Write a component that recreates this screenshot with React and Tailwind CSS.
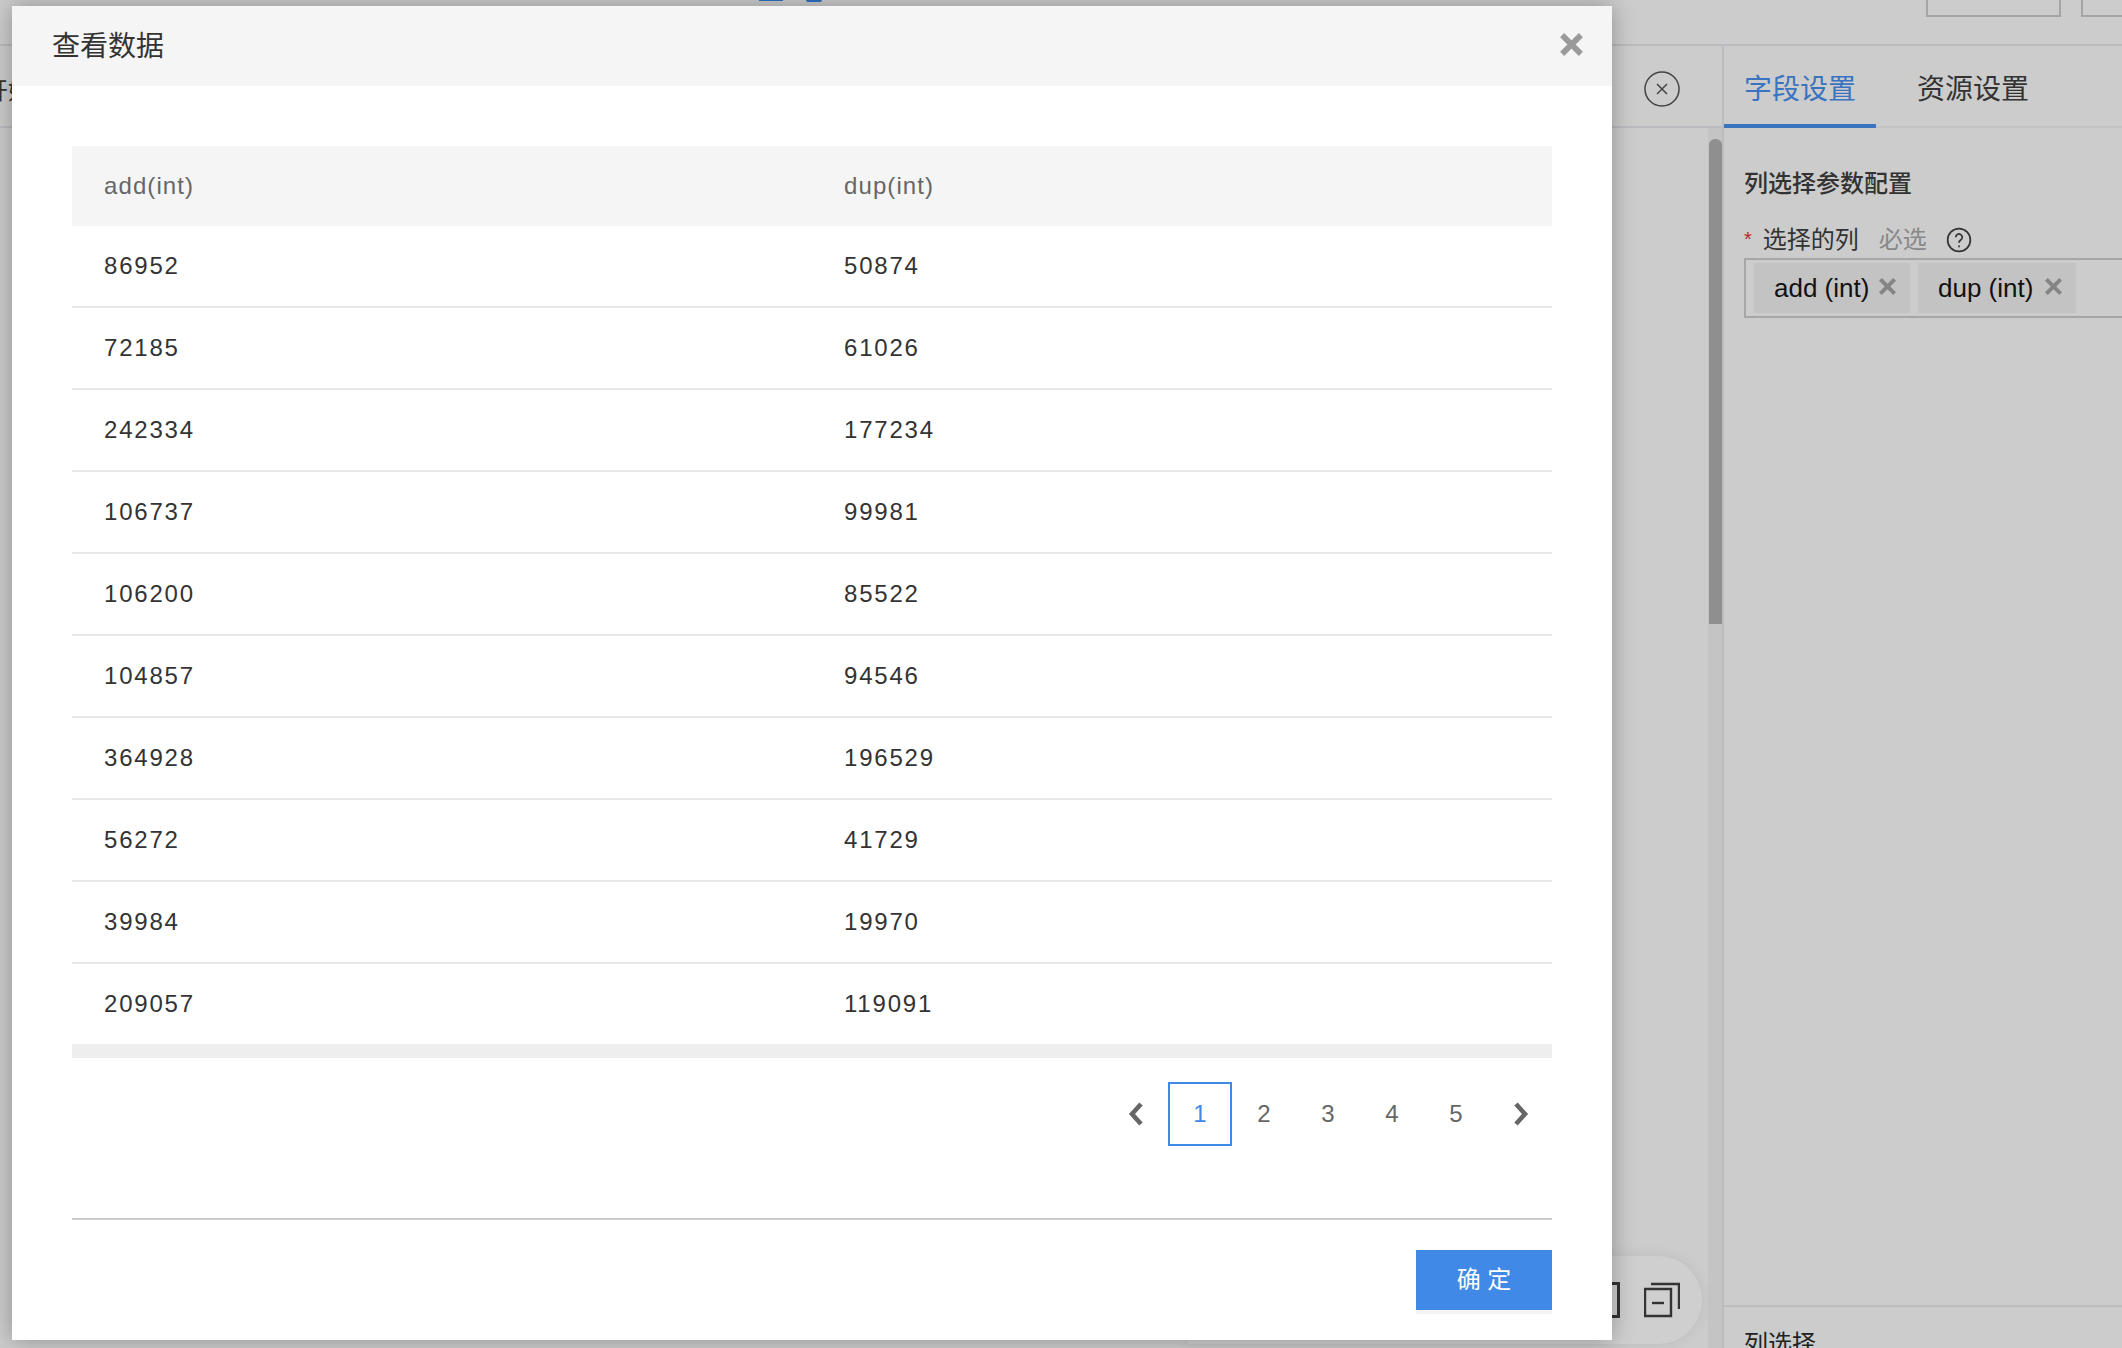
const rows = [
  ['86952', '50874'],
  ['72185', '61026'],
  ['242334', '177234'],
  ['106737', '99981'],
  ['106200', '85522'],
  ['104857', '94546'],
  ['364928', '196529'],
  ['56272', '41729'],
  ['39984', '19970'],
  ['209057', '119091'],
];

function CloseX({ className, width = 5 }) {
  return (
    <svg viewBox="0 0 24 24" className={className} fill="none" stroke="currentColor" strokeWidth={width}>
      <path d="M3 3 21 21M21 3 3 21" />
    </svg>
  );
}

function Tag({ label, className }) {
  return (
    <div className={`flex h-[50px] items-center justify-between bg-[#c3c3c3] pl-[20px] pr-[13px] ${className}`}>
      <span className="text-[26px] text-[#111]">{label}</span>
      <CloseX className="mb-1 h-[19px] w-[19px] text-[#858585]" />
    </div>
  );
}

function Backdrop() {
  return (
    <div className="flex h-full w-full flex-col bg-[#cccccc]">
      <div className="flex h-[46px] shrink-0 items-start justify-end gap-5 border-b-2 border-[#bcbcc0]">
        <div className="h-[17px] w-[135px] border-2 border-t-0 border-[#a5a5a5]" />
        <div className="h-[17px] w-[41px] border-2 border-t-0 border-r-0 border-[#a5a5a5]" />
      </div>
      <div className="flex min-h-0 flex-1">
        <div className="flex min-w-0 flex-1 flex-col">
          <div className="flex h-[82px] shrink-0 items-center justify-end border-b-2 border-[#bcbcc0] pr-[42px] pt-[6px]">
            <svg viewBox="0 0 36 36" className="h-9 w-9 text-[#444]" fill="none" stroke="currentColor" strokeWidth="1.5">
              <circle cx="18" cy="18" r="17" />
              <path d="M13 13 23 23M23 13 13 23" />
            </svg>
          </div>
          <div className="flex flex-1 justify-end">
            <div className="w-[14px] bg-[#c4c4c4] pt-[11px]">
              <div className="ml-px h-[485px] w-[13px] rounded-t-md bg-[#8f8f8f]" />
            </div>
          </div>
        </div>
        <div className="flex w-[400px] shrink-0 flex-col border-l-2 border-[#bcbcc0]">
          <div className="flex h-[82px] shrink-0 items-end border-b-2 border-[#c2c2c2]">
            <div className="-mb-0.5 flex h-[82px] w-[152px] items-center border-b-4 border-[#3a74c0] pl-[20px] pt-[10px] text-[28px] text-[#3a74c0]">字段设置</div>
            <div className="flex h-[80px] items-center pl-[41px] pt-[8px] text-[28px] text-[#333]">资源设置</div>
          </div>
          <div className="flex flex-1 flex-col pl-[20px]">
            <div className="mt-[41px] text-[24px] font-medium leading-[30px] text-[#333]">列选择参数配置</div>
            <div className="mt-[23px] flex h-[36px] items-center text-[24px] text-[#333]">
              <span className="mr-[11px] mt-[-2px] text-[20px] text-[#b52a2a]">*</span>
              <span>选择的列</span>
              <span className="ml-[20px] text-[#888]">必选</span>
              <svg viewBox="0 0 24 24" className="ml-[19px] h-[26px] w-[26px] text-[#333]" fill="none" stroke="currentColor" strokeWidth="1.6">
                <circle cx="12" cy="12" r="10.5" />
                <path d="M9 9.5a3 3 0 1 1 4.6 2.5c-1 .7-1.6 1.2-1.6 2.5" />
                <path d="M12 17v1.6" />
              </svg>
            </div>
            <div className="flex h-[60px] items-center gap-[8px] border-2 border-r-0 border-[#a6a6a6] pl-[8px]">
              <Tag label="add (int)" className="w-[156px]" />
              <Tag label="dup (int)" className="w-[158px]" />
            </div>
            <div className="flex-1" />
            <div className="-ml-[20px] h-[43px] border-t-2 border-[#bdbdbd] pl-[20px] pt-[22px] text-[24px] leading-[30px] text-[#222]">列选择</div>
          </div>
        </div>
      </div>
    </div>
  );
}

export default function App() {
  return (
    <div className="relative h-[1348px] w-full overflow-hidden font-['Liberation_Sans','Noto_Sans_CJK_SC',sans-serif]">
      <Backdrop />

      {/* bits of the page that show round the dialog */}
      <div className="absolute left-[759px] top-0 h-px w-6 bg-[#2e6fc4]" />
      <div className="absolute left-[806px] top-0 h-[2px] w-4 rounded-b-full bg-[#2e6fc4]" />
      <div className="absolute left-[-16px] top-[73px] text-[24px] text-[#333]">开始</div>
      <div className="absolute left-[1188px] top-[1256px] flex h-[88px] w-[514px] items-center justify-end gap-[24px] rounded-r-[44px] bg-[#cfcfcf] pr-[22px] shadow-[0_0_14px_rgba(0,0,0,0.08)]">
        <div className="h-9 w-9 border-[3px] border-[#333]" />
        <svg viewBox="0 0 36 36" className="h-9 w-9 text-[#333]" fill="none" stroke="currentColor" strokeWidth="2.4">
          <path d="M1 7h26v27H1z" />
          <path d="M7 2h28v25" />
          <path d="M8 21h12" />
        </svg>
      </div>

      <div className="absolute left-[12px] top-[6px] flex h-[1334px] w-[1600px] flex-col bg-white shadow-[0_0_22px_rgba(0,0,0,0.3)]">
        <div className="flex h-[80px] shrink-0 items-center justify-between bg-[#f5f5f5] pl-[40px] pr-[28px]">
          <span className="pt-[2px] text-[28px] text-[#333]">查看数据</span>
          <CloseX className="mb-1 h-[25px] w-[25px] text-[#9a9a9a]" width={5.5} />
        </div>

        <div className="flex flex-1 flex-col px-[60px] pt-[60px]">
          <div className="grid h-[80px] shrink-0 grid-cols-2 items-center bg-[#f5f5f5] text-[24px] tracking-[1.1px] text-[#666]">
            <div className="pl-[32px]">add(int)</div>
            <div className="pl-[32px]">dup(int)</div>
          </div>
          {rows.map(([add, dup], i) => (
            <div key={add} className={`grid shrink-0 grid-cols-2 items-center text-[24px] tracking-[1.8px] text-[#333] ${i < rows.length - 1 ? 'h-[82px] border-b-2 border-[#e8e8e8]' : 'h-[80px]'}`}>
              <div className="pl-[32px]">{add}</div>
              <div className="pl-[32px]">{dup}</div>
            </div>
          ))}
          <div className="h-[14px] shrink-0 bg-[#eeeeee]" />

          <div className="mt-[24px] flex justify-end text-[24px] text-[#666]">
            <div className="flex h-[64px] w-[64px] items-center justify-center">
              <svg viewBox="0 0 16 24" className="h-[24px] w-[16px]" fill="none" stroke="currentColor" strokeWidth="4.6">
                <path d="M13 2 4 12l9 10" />
              </svg>
            </div>
            <div className="flex h-[64px] w-[64px] items-center justify-center border-2 border-[#3f88e6] text-[#3f88e6]">1</div>
            {[2, 3, 4, 5].map((n) => (
              <div key={n} className="flex h-[64px] w-[64px] items-center justify-center">{n}</div>
            ))}
            <div className="flex h-[64px] w-[64px] items-center justify-center pl-[2px]">
              <svg viewBox="0 0 16 24" className="h-[24px] w-[16px]" fill="none" stroke="currentColor" strokeWidth="4.6">
                <path d="M3 2l9 10-9 10" />
              </svg>
            </div>
          </div>

          <div className="mt-[72px] h-[2px] shrink-0 bg-[#cccccc]" />
          <div className="mt-[30px] flex justify-end">
            <button className="h-[60px] w-[136px] bg-[#4189e6] text-[24px] text-white shadow-[0_4px_0_#f4f4f4]">确 定</button>
          </div>
        </div>
      </div>
    </div>
  );
}
